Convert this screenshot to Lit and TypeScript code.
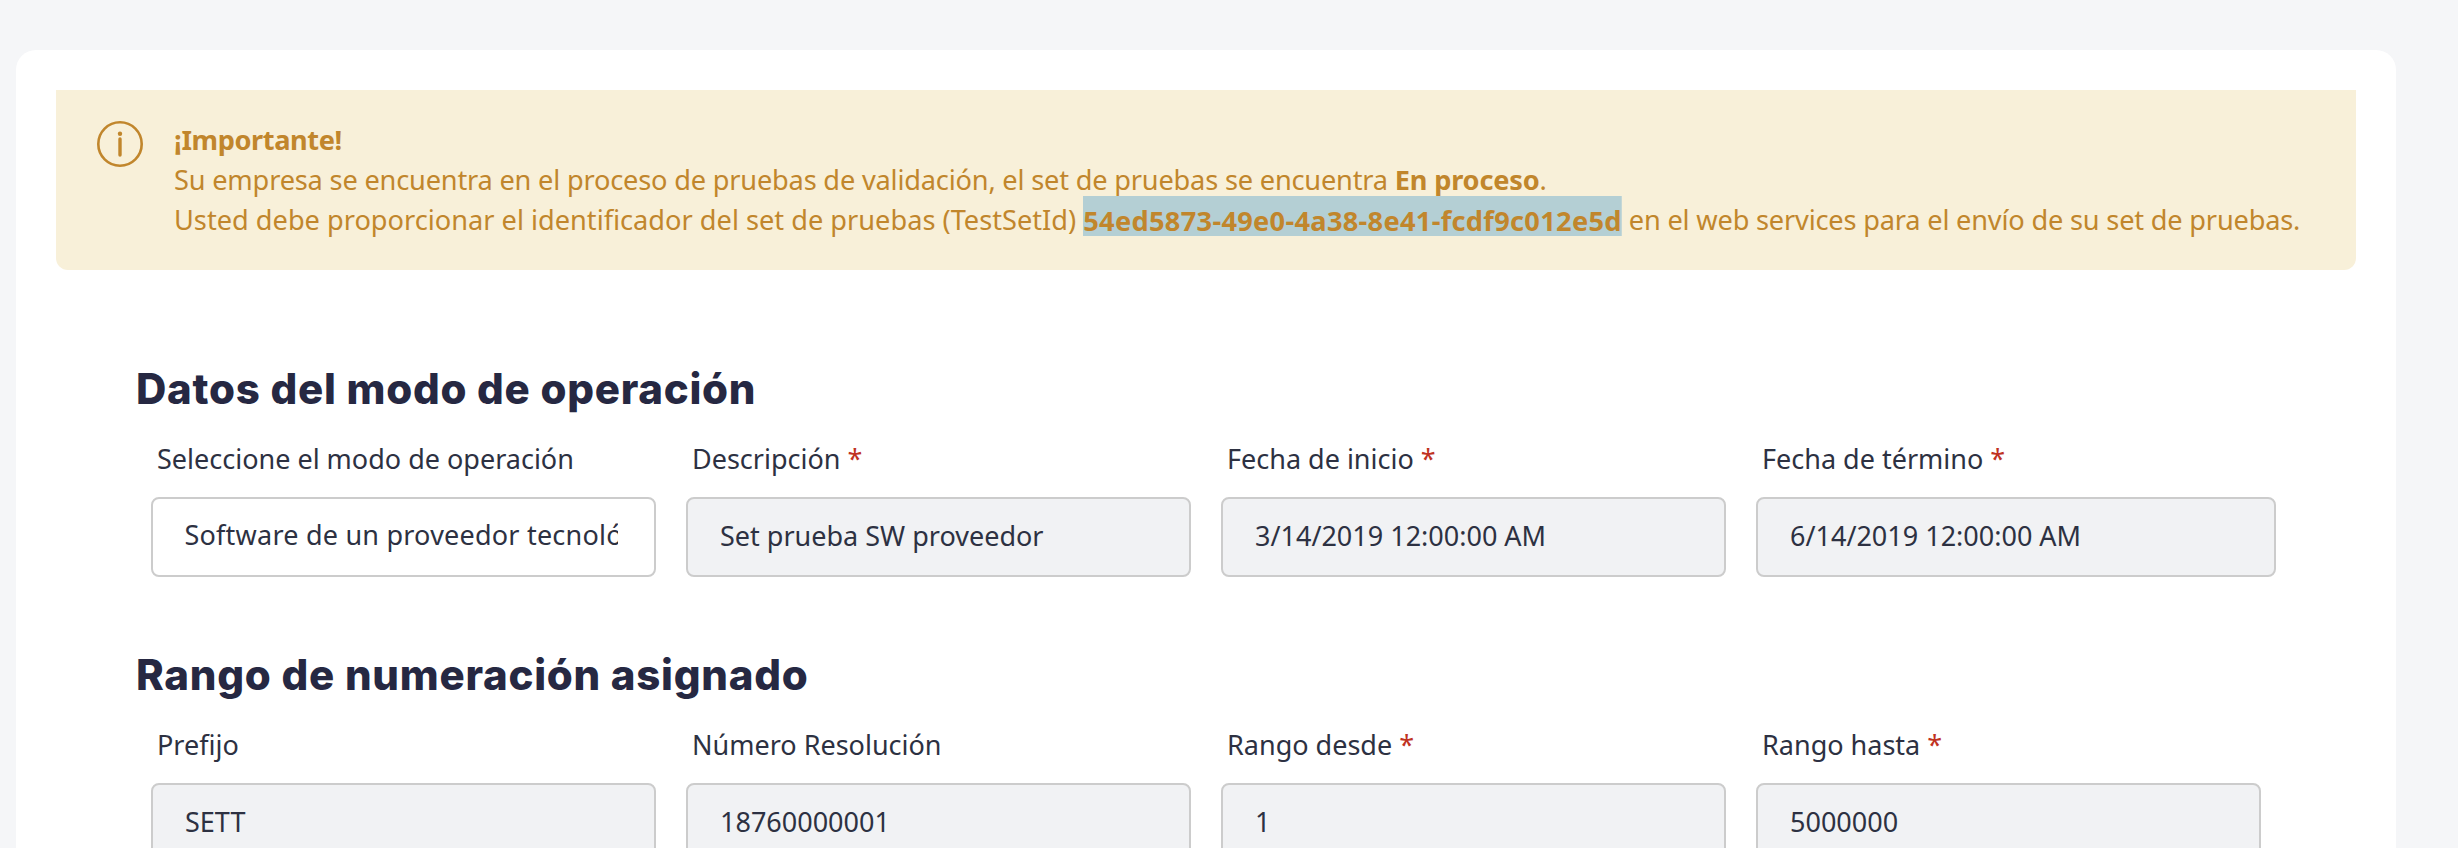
import {html, css, LitElement} from 'lit';
import {customElement} from 'lit/decorators.js';

interface Field {
    label: string;
    value: string;
    required?: boolean;
    editable?: boolean;
    wide?: boolean;
}

const operationFields: Field[] = [
    {label: 'Seleccione el modo de operación', value: 'Software de un proveedor tecnológico', editable: true},
    {label: 'Descripción', value: 'Set prueba SW proveedor', required: true},
    {label: 'Fecha de inicio', value: '3/14/2019 12:00:00 AM', required: true},
    {label: 'Fecha de término', value: '6/14/2019 12:00:00 AM', required: true, wide: true},
];

const rangeFields: Field[] = [
    {label: 'Prefijo', value: 'SETT'},
    {label: 'Número Resolución', value: '18760000001'},
    {label: 'Rango desde', value: '1', required: true},
    {label: 'Rango hasta', value: '5000000', required: true},
];

@customElement('app-root')
export class AppRoot extends LitElement {
    renderField(field: Field) {
        const classes = `control ${field.editable ? 'editable' : ''}`;
        return html`
            <div class="field ${field.wide ? 'wide' : ''}">
                <label>${field.label}${field.required ? html` <span class="req">*</span>` : ''}</label>
                <div class=${classes}><span class="value">${field.value}</span></div>
            </div>
        `;
    }

    render() {
        return html`
            <div class="card">
                <div class="alert">
                    <svg class="icon" viewBox="0 0 46 46" fill="none" stroke="currentColor">
                        <circle cx="23" cy="23" r="21.7" stroke-width="2.6" />
                        <path d="M23 18v16" stroke-width="3.4" stroke-linecap="round" />
                        <circle cx="23" cy="12.8" r="2.2" fill="currentColor" stroke="none" />
                    </svg>
                    <div class="alert-text">
                        <div><b class="title">¡Importante!</b></div>
                        <div class="status">Su empresa se encuentra en el proceso de pruebas de validación, el set de pruebas se encuentra <b>En proceso</b>.</div>
                        <div>Usted debe proporcionar el identificador del set de pruebas (TestSetId) <b class="mark">54ed5873-49e0-4a38-8e41-fcdf9c012e5d</b> <span class="tail">en el web services para el envío de su set de pruebas.</span></div>
                    </div>
                </div>
                <section class="first">
                    <h2>Datos del modo de operación</h2>
                    <div class="row">${operationFields.map((f) => this.renderField(f))}</div>
                </section>
                <section class="second">
                    <h2>Rango de numeración asignado</h2>
                    <div class="row">${rangeFields.map((f) => this.renderField(f))}</div>
                </section>
            </div>
        `;
    }

    static styles = css`
        :host {
            display: block;
            height: 848px;
            overflow: hidden;
            box-sizing: border-box;
            padding: 50px 62px 0 16px;
            background: #f5f6f8;
            font-family: 'Noto Sans', sans-serif;
        }

        .card {
            background: #fff;
            border-radius: 20px;
            padding: 40px 40px 60px;
        }

        .alert {
            display: flex;
            gap: 31px;
            height: 180px;
            box-sizing: border-box;
            padding: 30px 0 0 41px;
            background: #f8f0d9;
            border-radius: 0 0 12px 12px;
            color: #c1862c;
            font-size: 27.2px;
            line-height: 40px;
            white-space: nowrap;
        }

        .icon {
            width: 46px;
            height: 46px;
            flex: none;
            margin-top: 1px;
        }

        .title {
            letter-spacing: -0.4px;
        }

        .status {
            letter-spacing: -0.19px;
        }

        .tail {
            letter-spacing: -0.19px;
        }

        .mark {
            padding-top: 5.5px;
            background: linear-gradient(#b4cfd4, #b4cfd4) top / 100% 40px no-repeat;
            letter-spacing: 0.3px;
        }

        section {
            padding-left: 95px;
        }

        section.first {
            margin-top: 93px;
        }

        section.second {
            margin-top: 72px;
        }

        h2 {
            margin: 0 0 0 -15px;
            font-family: Inter, sans-serif;
            font-size: 42px;
            letter-spacing: 0.74px;
            line-height: 52px;
            font-weight: 800;
            color: #262842;
        }

        .row {
            display: flex;
            gap: 30px;
            margin-top: 24px;
        }

        .field {
            width: 505px;
            flex: none;
        }

        .field.wide {
            width: 520px;
        }

        label {
            display: block;
            padding-left: 6px;
            height: 58px;
            line-height: 40px;
            font-size: 27px;
            color: #2d3142;
        }

        .req {
            color: #c0321f;
        }

        .control {
            height: 80px;
            box-sizing: border-box;
            padding: 0 34px 0 32px;
            border: 2.5px solid #ccc;
            border-radius: 8px;
            background: #f1f2f4;
            color: #2d3142;
            font-size: 27px;
            line-height: 74px;
            white-space: nowrap;
        }

        .control.editable {
            padding-left: 31.5px;
            padding-right: 36px;
            background: #fff;
            letter-spacing: 0.22px;
            line-height: 71px;
        }

        .value {
            display: block;
            overflow: hidden;
        }
    `;
}
